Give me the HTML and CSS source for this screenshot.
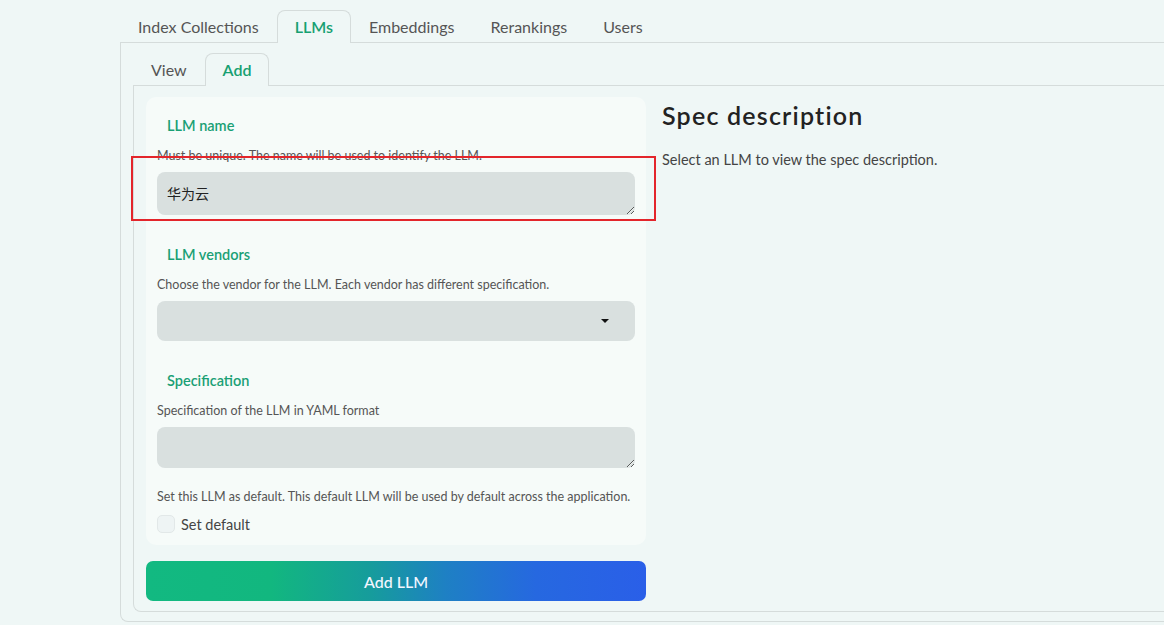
FILE: index.html
```html
<!DOCTYPE html>
<html lang="en">
<head>
    <meta charset="UTF-8">
    <title>Models</title>
    <link rel="stylesheet" href="styles.css">
</head>
<body>
    <div class="app">
        <div class="tabs">
            <div class="tab">Index Collections</div>
            <div class="tab active">LLMs</div>
            <div class="tab">Embeddings</div>
            <div class="tab">Rerankings</div>
            <div class="tab">Users</div>
        </div>
        <div class="panel outer">
            <div class="tabs sub">
                <div class="tab">View</div>
                <div class="tab active">Add</div>
            </div>
            <div class="panel inner">
                <div class="form-col">
                    <div class="card">
                        <div class="label">LLM name</div>
                        <div class="desc">Must be unique. The name will be used to identify the LLM.</div>
                        <textarea class="field area">华为云</textarea>

                        <div class="label">LLM vendors</div>
                        <div class="desc">Choose the vendor for the LLM. Each vendor has different specification.</div>
                        <div class="field select"><span class="caret"></span></div>

                        <div class="label">Specification</div>
                        <div class="desc">Specification of the LLM in YAML format</div>
                        <textarea class="field area spec"></textarea>

                        <div class="desc default-desc">Set this LLM as default. This default LLM will be used by default across the application.</div>
                        <label class="check">
                            <span class="box"></span>
                            Set default
                        </label>
                    </div>
                    <button class="submit">Add LLM</button>
                </div>
                <div class="spec-col">
                    <h2>Spec description</h2>
                    <p>Select an LLM to view the spec description.</p>
                </div>
            </div>
        </div>
    </div>

    <!-- highlight box -->
    <div class="highlight"></div>
</body>
</html>
```

FILE: styles.css
```css
body {
    margin: 0;
    background-color: #eff7f6;
    font-family: "Lato", "Noto Sans CJK SC", sans-serif;
    color: #333;
}

.app {
    padding: 10px 0 0 120px;
}

.tabs {
    display: flex;
}

.tab {
    height: 32px;
    line-height: 31px;
    padding: 0 17px;
    font-size: 16px;
    color: #555;
    border: 1px solid transparent;
    border-bottom: none;
    border-radius: 8px 8px 0 0;
    box-sizing: border-box;
}

.tab.active {
    color: #16a071;
    font-weight: 600;
    border-color: #d5dcdb;
    background-color: #eff7f6;
    margin-bottom: -1px;
    height: 33px;
    position: relative;
}

.panel {
    border: 1px solid #d5dcdb;
    border-right: none;
    border-radius: 0 0 0 8px;
}

.outer {
    height: 580px;
    padding: 10px 0 0 12px;
    box-sizing: border-box;
}

.inner {
    display: flex;
    height: 527px;
    box-sizing: border-box;
    padding: 11px 0 0 12px;
}

.form-col {
    width: 500px;
    display: flex;
    flex-direction: column;
}

.card {
    background-color: #f6fbf9;
    border-radius: 10px;
    padding: 19px 11px 12px 11px;
    display: flex;
    flex-direction: column;
}

.label {
    font-size: 14.5px;
    font-weight: 600;
    color: #1aa075;
    line-height: 20px;
    height: 20px;
    margin: 30px 0 12px 10px;
}

.card .label:first-child {
    margin-top: 0;
}

.desc {
    font-size: 12.5px;
    line-height: 16px;
    height: 16px;
    color: #555;
    margin-bottom: 8px;
}

.field {
    background-color: #d9e0df;
    border: none;
    border-radius: 8px;
    box-sizing: border-box;
    width: 100%;
}

.area {
    height: 43px;
    padding: 11px 10px;
    font-family: "Lato", "Noto Sans CJK SC", sans-serif;
    font-size: 14px;
    color: #222;
    resize: vertical;
    outline: none;
    display: block;
}

.area.spec {
    height: 41px;
}

.select {
    height: 40px;
    display: flex;
    align-items: center;
    justify-content: flex-end;
    padding-right: 26px;
}

.caret {
    width: 0;
    height: 0;
    border-left: 4px solid transparent;
    border-right: 4px solid transparent;
    border-top: 4px solid #111;
}

.default-desc {
    margin-top: 21px;
    margin-bottom: 10px;
}

.check {
    display: flex;
    align-items: center;
    height: 18px;
    gap: 6px;
    font-size: 14.5px;
    color: #444;
}

.box {
    width: 18px;
    height: 18px;
    border-radius: 5px;
    background-color: #eef4f4;
    border: 1px solid #e2e8e8;
    box-sizing: border-box;
}

.submit {
    margin-top: 16px;
    height: 40px;
    border: none;
    border-radius: 7px;
    background: linear-gradient(90deg, #12b981 0%, #12b77f 25%, #169c9c 45%, #1e80c4 60%, #2668e0 78%, #2a5fe8 100%);
    color: #f2f6ff;
    font-family: "Lato", sans-serif;
    font-size: 16px;
    font-weight: 500;
}

.spec-col {
    padding-left: 16px;
}

.spec-col h2 {
    margin: 2px 0 0 0;
    font-size: 25px;
    font-weight: 600;
    letter-spacing: 1.2px;
    line-height: 32px;
    color: #222;
}

.spec-col p {
    margin: 20px 0 0 0;
    font-size: 14.5px;
    color: #444;
}

.highlight {
    position: absolute;
    left: 131px;
    top: 156px;
    width: 525px;
    height: 65px;
    border: 2px solid #e3252b;
    box-sizing: border-box;
}
```
